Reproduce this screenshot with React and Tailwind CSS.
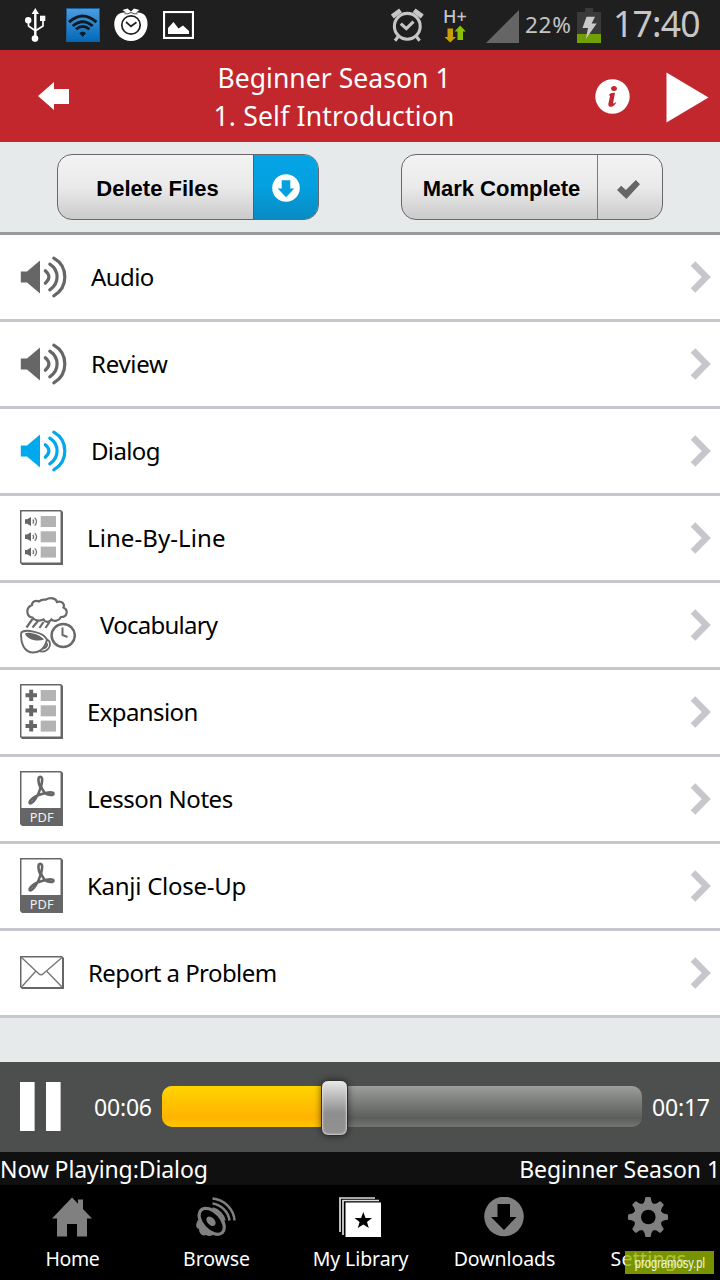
import React from "react";

const sans = "font-['Noto_Sans','Open_Sans',sans-serif]";

function UsbIcon() {
  return (
    <svg width="21" height="35" viewBox="0 0 21 35" fill="none" stroke="#fff" strokeWidth="1.8">
      <path d="M10.3 30V5" strokeWidth="2.4" />
      <path d="M3.5 12.5V18L10 22.5M18 12V18L11 22.5" strokeWidth="1.7" />
      <path d="M10.3 0L14 6H6.6Z" fill="#fff" stroke="none" />
      <circle cx="3.2" cy="12.3" r="3.2" fill="#fff" stroke="none" />
      <circle cx="10" cy="30.6" r="3.3" fill="#fff" stroke="none" />
      <rect x="15" y="7.7" width="5.3" height="5.3" fill="#fff" stroke="none" />
    </svg>
  );
}

function WifiIcon() {
  return (
    <svg width="34" height="34" viewBox="0 0 34 34" fill="none" stroke="#13191f">
      <defs>
        <linearGradient id="wifi" x1="0" y1="0" x2="0" y2="1">
          <stop offset="0" stopColor="#4a9ee0" />
          <stop offset="1" stopColor="#0468b8" />
        </linearGradient>
      </defs>
      <rect x="0.5" y="0.5" width="33" height="33" fill="url(#wifi)" stroke="#1d5e96" />
      <path d="M3 14.2Q16.7 1.8 30.4 14.2" strokeWidth="3.1" />
      <path d="M6.7 18Q16.7 9.3 26.7 18" strokeWidth="2.9" />
      <path d="M10 21.3Q16.7 15.5 23.4 21.3" strokeWidth="2.7" />
      <path d="M13.8 25.2Q16.7 22.8 19.6 25.2L16.7 28.4Z" fill="#13191f" strokeWidth="0.8" />
    </svg>
  );
}

function TomatoIcon() {
  return (
    <svg width="34" height="34" viewBox="0 0 34 34">
      <path d="M12 4.5L8.500 2L13.500 .5L17 3.500L20 .5L25.500 2L22 4.500C30 3.500 34 9 33.500 17C33 26 26 33 17 33C8 33 .5 26 .3 17C0 9 4 3.500 12 4.500Z" fill="#fff" />
      <path d="M10.500 5.800Q14 6.300 17 4.500Q20 6.300 23.500 5.800" fill="none" stroke="#202020" strokeWidth="0.800" />
      <circle cx="17" cy="17" r="9.200" fill="none" stroke="#202020" strokeWidth="1.700" />
      <path d="M12 14L17 18.300L22.500 14.300" fill="none" stroke="#202020" strokeWidth="1.700" />
    </svg>
  );
}

function PictureIcon() {
  return (
    <svg width="31" height="28" viewBox="0 0 31 28">
      <rect x="1" y="1" width="29" height="26" fill="none" stroke="#fff" strokeWidth="2.200" />
      <path d="M5 23V17L10.500 11L15.500 17.500L20 14.500L26 20V23Z" fill="#fff" />
    </svg>
  );
}

function AlarmIcon() {
  return (
    <svg width="33" height="34" viewBox="0 0 33 34" fill="none" stroke="#c6c6c6">
      <circle cx="16.300" cy="18.300" r="12.900" strokeWidth="3.100" />
      <path d="M9.800 15.600L15.300 20.600L22.500 13.600" strokeWidth="3.100" />
      <path d="M1.300 8.500L9.500 2.300M31.300 8.500L23.100 2.300" strokeWidth="4.800" />
      <path d="M7 28.800L4 32.800M25.600 28.800L28.600 32.800" strokeWidth="3.100" />
    </svg>
  );
}

function NetworkIcon() {
  return (
    <div className="flex w-6 flex-col items-center">
      <span className={`${sans} h-[17px] text-[18px] leading-[17px] font-medium text-[#c6c6c6]`}>H+</span>
      <svg width="22" height="18" viewBox="0 0 22 18">
        <path d="M3.500 3.500H9V12H12L6.200 17.500L.5 12H3.500Z" fill="#c9a000" />
        <path d="M13.500 15V6.500H10.500L16.200 .5L21.800 6.500H19V15Z" fill="#8cc004" />
      </svg>
    </div>
  );
}

function BatteryIcon() {
  return (
    <svg width="24" height="35" viewBox="0 0 24 35">
      <path d="M8 0H16V4H24V35H0V4H8Z" fill="#3a3a3a" />
      <rect y="26" width="24" height="9" fill="#709f06" />
      <path d="M9.500 8.700H18L14.700 15.500H19.700L8.800 31L11 20H5.500Z" fill="#cacaca" />
    </svg>
  );
}

function StatusBar() {
  return (
    <div className="flex h-[50px] items-center bg-[#1f1f1f]">
      <div className="ml-[25px]"><UsbIcon /></div>
      <div className="ml-5"><WifiIcon /></div>
      <div className="ml-[14px]"><TomatoIcon /></div>
      <div className="ml-[15px]"><PictureIcon /></div>
      <div className="ml-auto"><AlarmIcon /></div>
      <div className="ml-[19px]"><NetworkIcon /></div>
      <svg className="ml-[19px] mt-[3px]" width="33" height="33" viewBox="0 0 33 33"><path d="M33 0V33H0Z" fill="#656565" /></svg>
      <span className={`${sans} ml-[6px] w-[52px] text-[22.500px] tracking-[0.700px] whitespace-nowrap text-[#c4c4c4]`}>22%</span>
      <BatteryIcon />
      <span className={`${sans} -mt-1 ml-[12px] w-[107px] text-[35.500px] leading-[50px] tracking-[-0.800px] text-[#c6c6c6]`}>17:40</span>
    </div>
  );
}

function Header() {
  return (
    <header className="flex h-[92px] items-center bg-[#c1272d] text-white">
      <svg className="ml-[38px]" width="32" height="30" viewBox="0 0 32 30"><path d="M0 15L16 1V8H31V23H16V29Z" fill="#fff" /></svg>
      <h1 className={`${sans} mt-[2px] ml-[114px] w-[300px] text-center text-[26.500px] leading-[38px] font-normal whitespace-nowrap`}>
        <span className="block tracking-[0.050px]">Beginner Season 1</span>
        <span className="block tracking-[0.200px]">1. Self Introduction</span>
      </h1>
      <svg className="ml-[111px]" width="36" height="36" viewBox="0 0 36 36">
        <circle cx="17.500" cy="18.500" r="17.200" fill="#fff" />
        <ellipse cx="19" cy="10.500" rx="2.900" ry="2.500" fill="#c1272d" />
        <path d="M13.300 17.500C15.300 14.800 17.500 14.500 20 14.800L18.200 24.500C18 26 19 26 21.500 23.500C20.500 27.500 17 29.500 14.500 28.500C12.500 27.500 13.700 24.500 14.200 22L15 18.200C15 17 14.500 17 13.300 17.500Z" fill="#c1272d" />
      </svg>
      <svg className="ml-[35px] mt-[2px]" width="43" height="51" viewBox="0 0 43 51"><path d="M.5 .5L42.500 25.500L.5 50.500Z" fill="#fff" /></svg>
    </header>
  );
}

function ActionButton({ label, active, children }) {
  return (
    <button className="flex h-[66px] w-[262px] overflow-hidden rounded-[15px] border border-[#686868] bg-linear-to-b from-[#f3f3f3] via-[#eaeaea] to-[#cbcbcb]">
      <span className="flex flex-1 items-center justify-center pt-[2px] pl-[4px] font-['Liberation_Sans',Arial,sans-serif] text-[22px] font-bold text-black">{label}</span>
      <span className={`flex h-full w-[65px] items-center justify-center border-l-[1.500px] ${active ? "border-[#42677b] bg-linear-to-b from-[#05a4e5] via-[#04a0df] to-[#088bc3]" : "border-[#7c7c7c]"}`}>
        {children}
      </span>
    </button>
  );
}

function Toolbar() {
  return (
    <div className="flex h-[93px] justify-between border-b-[3px] border-[#979b9a] bg-[#e6eaeb] pt-3 pr-[57px] pl-[57px]">
      <ActionButton label="Delete Files" active>
        <svg className="mt-px -ml-px" width="28" height="28" viewBox="0 0 28 28">
          <circle cx="14" cy="14" r="13.800" fill="#fff" />
          <path d="M9.700 6.300H18.300V14.500H22.300L14 23.300L5.700 14.500H9.700Z" fill="#04a0df" />
        </svg>
      </ActionButton>
      <ActionButton label="Mark Complete">
        <svg className="mt-1 -ml-[3px]" width="23" height="19" viewBox="0 0 22 18"><path d="M0 9.500L4 5.500L8.500 9.500L18 0L22 4L9 18Z" fill="#666" /></svg>
      </ActionButton>
    </div>
  );
}

function SpeakerIcon({ color = "#666" }) {
  return (
    <svg width="47" height="42" viewBox="0 0 47 42" fill="none" stroke={color} strokeWidth="3.200" strokeLinecap="round">
      <path d="M.8 15.500H7L20 4.500V37.500L7 26.500H.8Z" fill={color} stroke="none" />
      <path d="M25.300 14.800Q32.500 21 25.300 27.200" />
      <path d="M29.800 8.200C39.500 14.500 39.500 27.500 29.800 33.800" />
      <path d="M33.800 2.200C48.500 10.500 48.500 31.500 33.800 39.800" />
    </svg>
  );
}

function Page({ children }) {
  return (
    <svg className="-mt-[2px]" width="43" height="55" viewBox="0 0 43 55">
      <path d="M0 0H41L43 2V55H2L0 53Z" fill="#666" />
      <rect x="1.500" y="1.500" width="39" height="51" fill="#fff" />
      {children}
    </svg>
  );
}

const lines = [6, 21.300, 36.600];

function LineByLineIcon() {
  return (
    <Page>
      {lines.map((y) => (
        <g key={y}>
          <rect x="20.700" y={y} width="15.300" height="11" fill="#b3b3b3" />
          <path d={`M5 ${y + 3.300}H7L11 ${y + 1}V${y + 10}L7 ${y + 7.700}H5Z`} fill="#666" />
          <path d={`M12.800 ${y + 3.500}Q14.500 ${y + 5.500} 12.800 ${y + 7.500}M14.700 ${y + 1.800}Q18.500 ${y + 5.500} 14.700 ${y + 9.500}`} fill="none" stroke="#777" strokeWidth="1.300" />
        </g>
      ))}
    </Page>
  );
}

function ExpansionIcon() {
  return (
    <Page>
      {lines.map((y) => (
        <g key={y}>
          <rect x="20.700" y={y} width="15.300" height="11" fill="#b3b3b3" />
          <path d={`M11.200 ${y - 0.300}V${y + 11}M5.500 ${y + 5.300}H17`} stroke="#666" strokeWidth="4" />
        </g>
      ))}
    </Page>
  );
}

function PdfIcon() {
  return (
    <svg className="-mt-[2px]" width="43" height="55" viewBox="0 0 43 55">
      <path d="M0 0H41L43 2V55H2L0 53Z" fill="#666" />
      <rect x="1.500" y="1.500" width="39" height="35.500" fill="#fff" />
      <g fill="none" stroke="#666" strokeWidth="2.600" strokeLinejoin="round">
        <path d="M20.500 17C17.800 11 17.800 5.900 20.200 5.700C23 5.600 22.500 11 20.500 17C18.500 24.500 12.500 33.200 10 32.300C8 31 12.500 26.500 18 24.300C23 22.500 32.500 20 33.500 22.300C34 25.200 27.500 24.200 24.500 21.500Q21.500 18.500 20.500 13" />
      </g>
      <text x="21.700" y="50.800" textAnchor="middle" fill="#f2f2f2" fontSize="12.800" letterSpacing="0" fontFamily="Noto Sans, sans-serif">PDF</text>
    </svg>
  );
}

function VocabularyIcon() {
  return (
    <svg width="56" height="57" viewBox="0 0 56 57" fill="none" stroke="#6a6a6a" strokeWidth="2.200">
      <path d="M12.500 20.500C6.500 20 5 11 12 8C12 4.500 16 2.800 19 4.500C22 1.500 25 3 26 2.500C30 0 36 1 37 5C42 3.500 45 7 43.500 10.500C48.500 13 47.500 20 41 20C39 24 34 25 31.500 22.500C29 26 25 25.500 23.500 22.500C19 24.500 14 23.500 12.500 20.500Z" />
      <path d="M12.500 22L6.500 30.500M18 24L12.500 30.500M23.500 25L19.500 31M29.500 25L25.500 31" />
      <circle cx="43.200" cy="38.500" r="11.600" strokeWidth="2.500" />
      <path d="M42.500 30.500V38L47.500 40" strokeWidth="2" />
      <path d="M1.200 36C3 31.500 23.500 34.500 27 42.500C25 51 20 55.500 12.500 55.500C4 55 .3 46 1.200 36Z" strokeWidth="1.900" />
      <path d="M5 36.500C8 34.500 20 37.500 24 42.500C17 45.500 6 42 5 36.500Z" fill="#666" stroke="none" />
      <path d="M26.500 43C30.500 43 31 48.500 28.500 51.500C26 54.500 22 55 19 54M25.500 46.500C28.500 46 27.500 51 22.500 51.500" strokeWidth="1.800" />
    </svg>
  );
}

function MailIcon() {
  return (
    <svg className="-mt-px" width="44" height="33" viewBox="0 0 44 33">
      <path d="M0 0H42L44 2V33H2L0 31Z" fill="#666" />
      <rect x="1.500" y="1.500" width="40.500" height="29.500" fill="#fff" />
      <path d="M1.500 1.500L18.500 17.500Q21 20 23.500 17.500L42 1.500M1.500 31L15.500 15.500M42 31L27 15.500" fill="none" stroke="#777" strokeWidth="1.400" />
    </svg>
  );
}

const rows = [
  { label: "Audio", icon: <SpeakerIcon />, text: "tracking-[-0.600px]" },
  { label: "Review", icon: <SpeakerIcon />, text: "tracking-[-0.300px]" },
  { label: "Dialog", icon: <SpeakerIcon color="#00a9eb" />, text: "tracking-[-0.650px]" },
  { label: "Line-By-Line", icon: <LineByLineIcon />, text: "tracking-[0.080px]" },
  { label: "Vocabulary", icon: <VocabularyIcon />, text: "tracking-[-0.750px]" },
  { label: "Expansion", icon: <ExpansionIcon />, text: "tracking-[-0.600px]" },
  { label: "Lesson Notes", icon: <PdfIcon />, text: "tracking-[-0.450px]" },
  { label: "Kanji Close-Up", icon: <PdfIcon />, text: "tracking-[-0.270px]" },
  { label: "Report a Problem", icon: <MailIcon />, text: "tracking-[-0.570px]" },
];

function LessonList() {
  return (
    <ul className="bg-white">
      {rows.map(({ label, icon, text }) => (
        <li key={label} className="flex h-[87px] items-center border-b-[3px] border-[#c7c6cc] pr-[9px] pl-5">
          {icon}
          <span className={`${sans} ml-6 text-[24px] leading-8 whitespace-nowrap text-black ${text}`}>{label}</span>
          <svg className="ml-auto" width="21" height="33" viewBox="0 0 21 33"><path d="M3 2.500L16.300 16L3 29.500" fill="none" stroke="#c7c6cc" strokeWidth="6.500" /></svg>
        </li>
      ))}
    </ul>
  );
}

function Player() {
  return (
    <div className="flex h-[90px] items-center bg-[#4d4f4e] text-white">
      <div className="ml-5 flex w-[41px] justify-between">
        <div className="-mt-px h-[49px] w-[15px] border-r border-[#bbb] bg-white" />
        <div className="-mt-px h-[49px] w-[15px] border-r border-[#bbb] bg-white" />
      </div>
      <span className={`${sans} mt-px ml-[33px] w-[68px] text-[23px] tracking-[-0.200px] whitespace-nowrap`}>00:06</span>
      <div className="relative -mt-[1px] h-[41px] w-[480px] rounded-[10px] bg-linear-to-b from-[#9d9e9d] from-0% via-[#5b5e5a] via-78% to-[#737573]">
        <div className="h-full w-[172px] rounded-l-[10px] bg-linear-to-b from-[#ffd400] from-0% via-[#ffb400] via-75% to-[#ffc400]" />
        <div className="absolute -top-[6px] left-[159px] h-[56px] w-[27px] rounded-[7px] border-[1.500px] border-[#303030] bg-linear-to-b from-[#e8e8e8] via-[#8e8e8e] via-60% to-[#929292] shadow-[0_0_7px_rgba(0,0,0,0.550),inset_0_0_2px_1px_rgba(235,235,235,0.700)]" />
      </div>
      <span className={`${sans} mt-px ml-[10px] text-[23px] tracking-[-0.200px] whitespace-nowrap`}>00:17</span>
    </div>
  );
}

function NowPlaying() {
  return (
    <div className={`${sans} flex h-[33px] items-center justify-between bg-[#101010] pt-px text-[23px] leading-8 whitespace-nowrap text-white`}>
      <span className="tracking-[-0.100px]">Now Playing:Dialog</span>
      <span className="tracking-[-0.050px]">Beginner Season 1</span>
    </div>
  );
}

function HomeIcon() {
  return (
    <svg width="40" height="40" viewBox="0 0 40 40"><path d="M0 21.500L20 .5L26 6.800V2.500H31V12L40 21.500H35V39.500H25V27H15V39.500H5V21.500Z" fill="#808080" /></svg>
  );
}

function BrowseIcon() {
  return (
    <svg width="40" height="40" viewBox="0 0 40 40" fill="none" stroke="#808080">
      <path d="M2 23C-1 28 0 31 3 32C3 37 7 39.500 10 38C13 40 16 38.500 18 37.500L6 24Z" fill="#808080" stroke="none" />
      <ellipse cx="15.700" cy="24.300" rx="15.500" ry="9.300" transform="rotate(47 15.700 24.300)" fill="#000" strokeWidth="3.200" />
      <ellipse cx="15" cy="24.300" rx="5.500" ry="3.700" transform="rotate(47 15 24.300)" fill="#808080" stroke="none" />
      <path d="M16.500 11.500C22 12.500 27.500 18 28.500 23.500M16.500 6.500C25 7.500 32.500 15 33.500 23.500M16.500 1.500C28 2.500 38 12 38.500 23.500" strokeWidth="2.500" />
    </svg>
  );
}

function LibraryIcon() {
  return (
    <svg width="43" height="40" viewBox="0 0 43 40" fill="none">
      <path d="M1 35V1H36M4 38V3.500H40" stroke="#ddd" strokeWidth="1.700" />
      <rect x="6.500" y="5.500" width="35.500" height="34.500" fill="#fff" />
      <path d="M24.300 15L26.500 21H33L28 25L29.800 31L24.300 27.500L18.800 31L20.600 25L15.500 21H22.100Z" fill="#000" />
    </svg>
  );
}

function DownloadsIcon() {
  return (
    <svg width="40" height="40" viewBox="0 0 40 40">
      <circle cx="20" cy="19.500" r="19.800" fill="#808080" />
      <path d="M13.500 7H26V20H32.500L20 33L7 20H13.500Z" fill="#000" />
    </svg>
  );
}

function SettingsIcon() {
  return (
    <svg width="40" height="40" viewBox="0 0 40 40" fill="#808080">
      {[0, 45, 90, 135, 180, 225, 270, 315].map((a) => (
        <path key={a} d="M12 9Q17 6 17 1.500Q17 0 18.500 0H21.500Q23 0 23 1.500Q23 6 28 9Z" transform={`rotate(${a} 20 20)`} />
      ))}
      <circle cx="20" cy="20" r="14.300" />
      <circle cx="20.300" cy="20" r="7.300" fill="#000" />
    </svg>
  );
}

const tabs = [
  { label: "Home", icon: <HomeIcon />, text: "tracking-[-0.400px]" },
  { label: "Browse", icon: <BrowseIcon />, text: "tracking-[-0.100px]" },
  { label: "My Library", icon: <LibraryIcon />, text: "tracking-[-0.100px]" },
  { label: "Downloads", icon: <DownloadsIcon />, text: "tracking-[-0.050px]" },
  { label: "Settings", icon: <SettingsIcon />, text: "tracking-[0.200px]" },
];

function TabBar() {
  return (
    <nav className="relative grid h-[95px] grid-cols-5 bg-black">
      {tabs.map(({ label, icon, text }) => (
        <div key={label} className="flex flex-col items-center pt-3">
          {icon}
          <span className={`${sans} mt-2 pl-px text-[19.500px] leading-7 whitespace-nowrap text-white ${text}`}>{label}</span>
        </div>
      ))}
      <div className="absolute right-[6px] bottom-[6px] flex h-[23px] w-[89px] items-center justify-center bg-[#96b600]/80">
        <span className="scale-x-[0.800] font-['Liberation_Sans',Arial,sans-serif] text-[14px] leading-none text-white/90">programosy.pl</span>
      </div>
    </nav>
  );
}

export default function App() {
  return (
    <div className="flex h-[1280px] w-[720px] flex-col overflow-hidden bg-[#e6eaeb]">
      <StatusBar />
      <Header />
      <Toolbar />
      <LessonList />
      <div className="mt-auto">
        <Player />
        <NowPlaying />
        <TabBar />
      </div>
    </div>
  );
}
